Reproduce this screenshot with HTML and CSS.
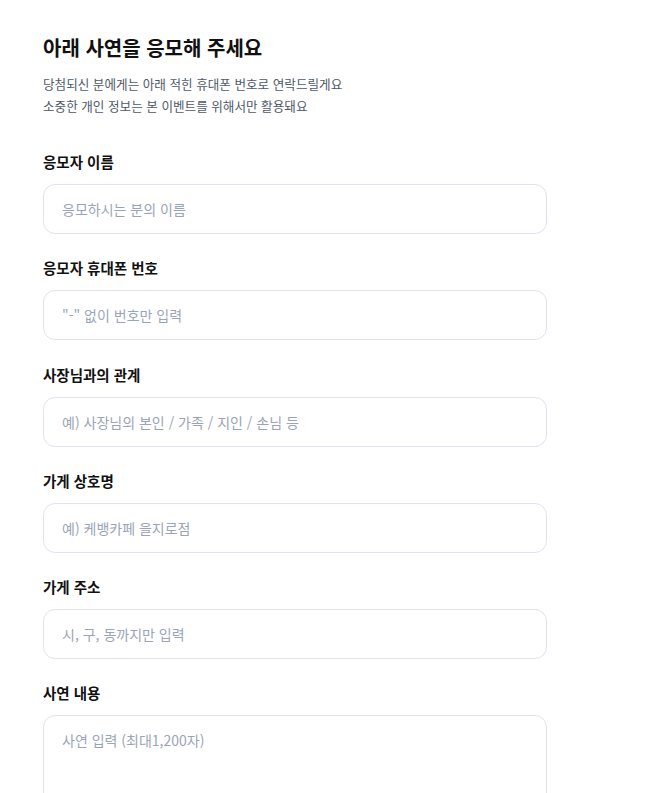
FILE: index.html
```html
<!DOCTYPE html>
<html lang="ko">
<head>
<meta charset="utf-8">
<link rel="stylesheet" href="styles.css">
</head>
<body>
<main class="page">
  <h1 class="title">아래 사연을 응모해 주세요</h1>
  <p class="desc">당첨되신 분에게는 아래 적힌 휴대폰 번호로 연락드릴게요<br>소중한 개인 정보는 본 이벤트를 위해서만 활용돼요</p>
  <form class="form">
    <label class="field">
      <span class="label">응모자 이름</span>
      <input class="input" type="text" placeholder="응모하시는 분의 이름">
    </label>
    <label class="field">
      <span class="label">응모자 휴대폰 번호</span>
      <input class="input" type="text" placeholder="&quot;-&quot; 없이 번호만 입력">
    </label>
    <label class="field">
      <span class="label">사장님과의 관계</span>
      <input class="input" type="text" placeholder="예) 사장님의 본인 / 가족 / 지인 / 손님 등">
    </label>
    <label class="field">
      <span class="label">가게 상호명</span>
      <input class="input" type="text" placeholder="예) 케뱅카페 을지로점">
    </label>
    <label class="field">
      <span class="label">가게 주소</span>
      <input class="input" type="text" placeholder="시, 구, 동까지만 입력">
    </label>
    <label class="field">
      <span class="label">사연 내용</span>
      <textarea class="input textarea" placeholder="사연 입력 (최대1,200자)"></textarea>
    </label>
  </form>
</main>
</body>
</html>
```

FILE: styles.css
```css
html, body {
  margin: 0;
  padding: 0;
  background: #ffffff;
}
body {
  font-family: "Noto Sans CJK KR", "Noto Sans", sans-serif;
  color: #111111;
}
.page {
  padding: 33px 43px 40px;
  width: 504px;
}
.title {
  margin: 0;
  font-size: 20px;
  line-height: 30px;
  font-weight: 700;
  color: #111111;
}
.desc {
  margin: 10px 0 0;
  font-size: 12.6px;
  line-height: 22px;
  color: #4e5968;
}
.form {
  margin-top: 34px;
  display: flex;
  flex-direction: column;
  gap: 23.25px;
}
.field {
  display: flex;
  flex-direction: column;
  gap: 11px;
}
.label {
  font-size: 14.5px;
  line-height: 22px;
  font-weight: 700;
  color: #111111;
}
.input {
  box-sizing: border-box;
  width: 504px;
  height: 50px;
  margin: 0;
  padding: 0 18px;
  border: 1px solid #dfe3f0;
  border-radius: 12px;
  background: #ffffff;
  font-family: "Noto Sans CJK KR", "Noto Sans", sans-serif;
  font-size: 14px;
  color: #111111;
  outline: none;
}
.input::placeholder {
  color: #9ba4b7;
  opacity: 1;
}
.textarea {
  height: 160px;
  padding: 13px 18px;
  line-height: 22px;
  resize: none;
  display: block;
}
```
